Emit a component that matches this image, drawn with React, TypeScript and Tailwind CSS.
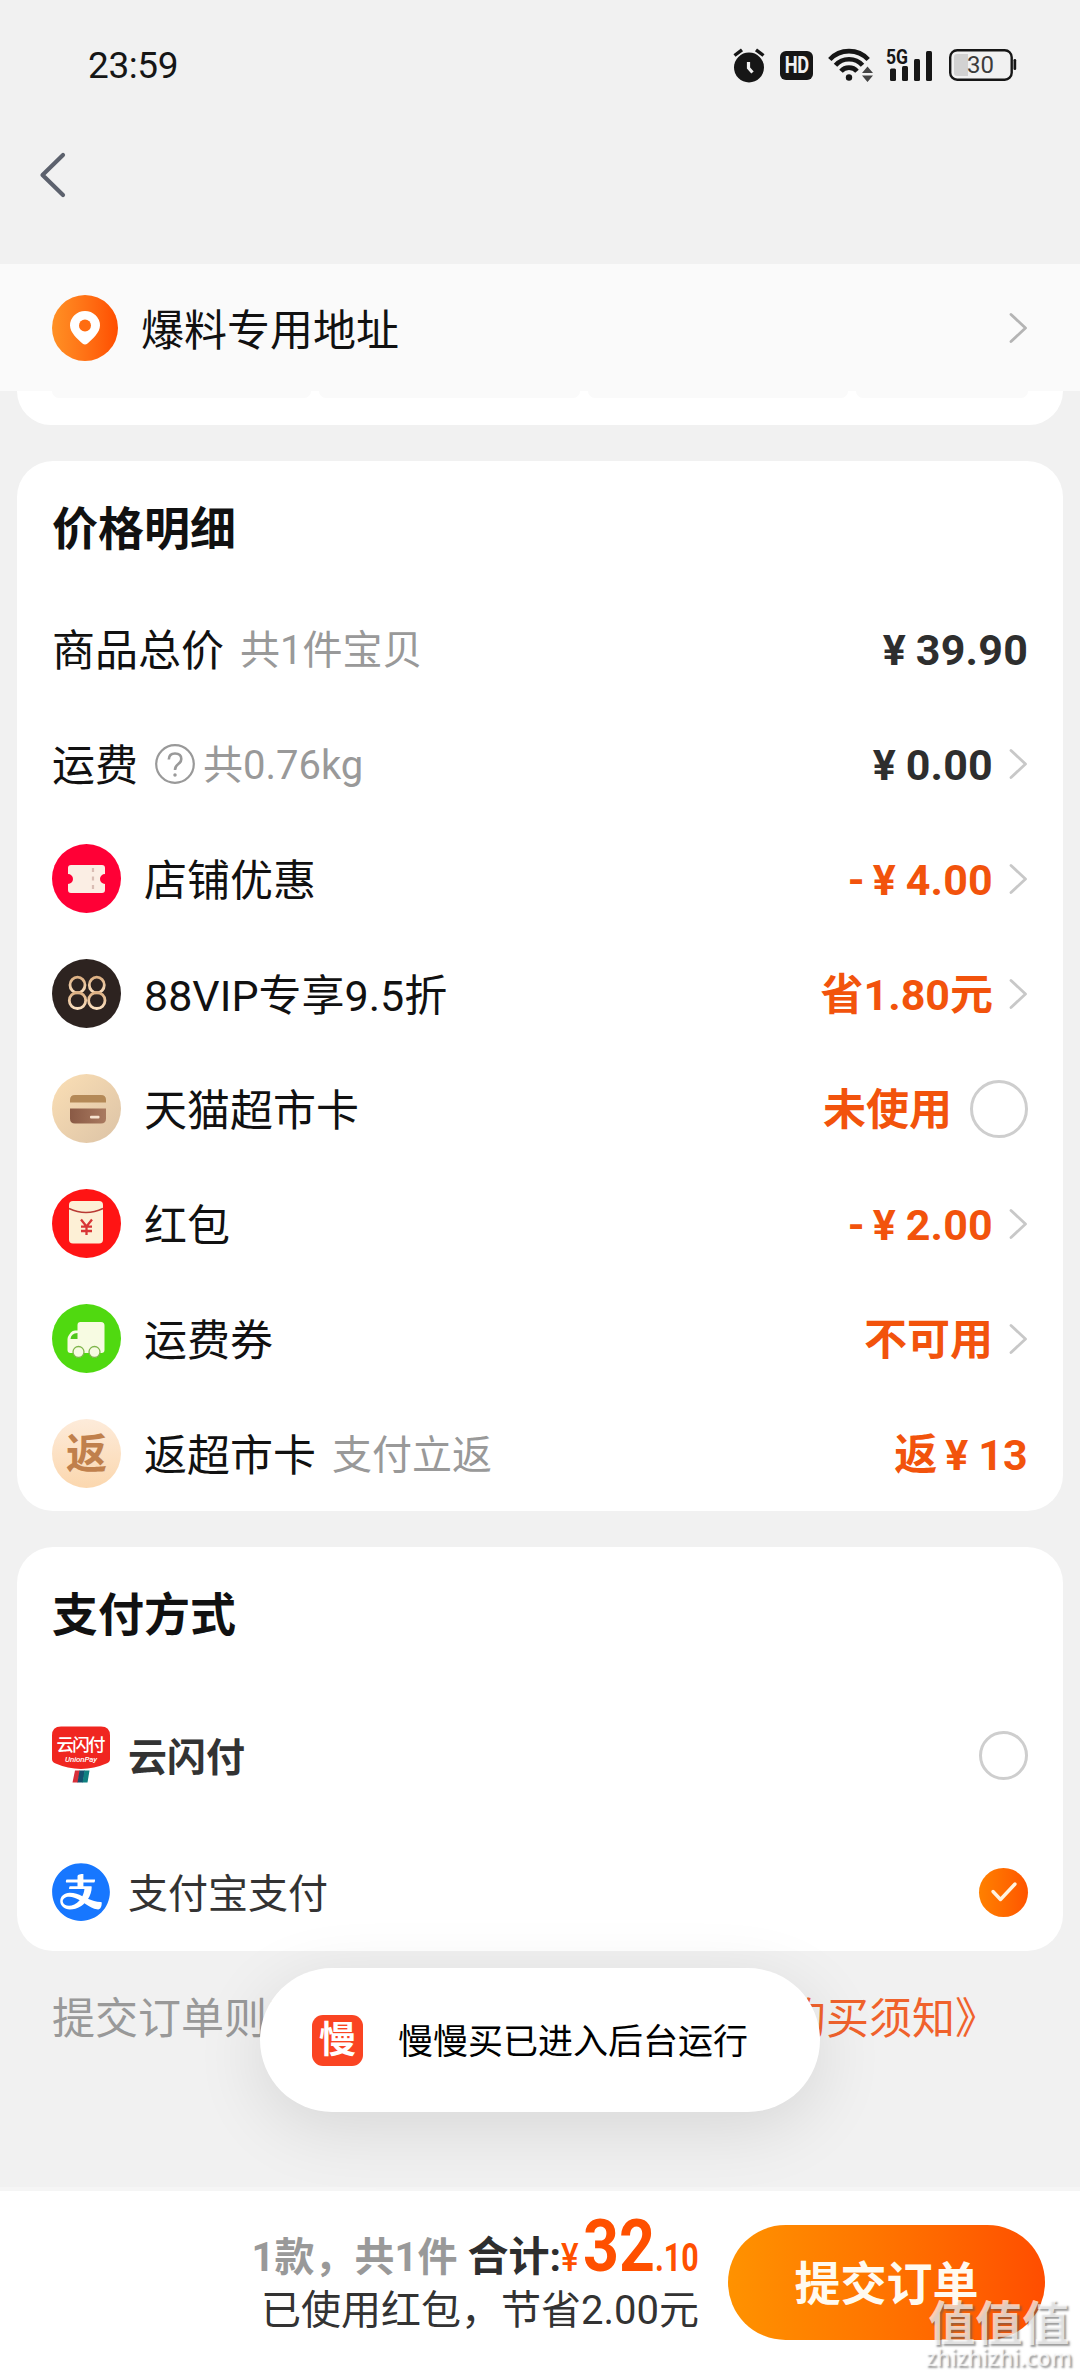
import React, { useState } from 'react';
import { AiFillAlipayCircle } from 'react-icons/ai';

interface PriceRow {
  id: string;
  icon?: React.ReactNode;
  label: string;
  help?: boolean;
  hint?: string;
  value: React.ReactNode;
  accent?: boolean;
  trailing?: 'arrow' | 'radio';
}

const Chevron: React.FC<{ className?: string }> = ({ className = 'text-[#c8c8c8]' }) => (
  <svg width="19" height="32" viewBox="0 0 19 32" fill="none" className={className}>
    <path d="M2 2.5L16.5 16L2 29.5" stroke="currentColor" strokeWidth="2.8" strokeLinecap="round" strokeLinejoin="round" />
  </svg>
);

const StatusBar = () => (
  <div className="flex h-[130px] items-center justify-between pr-[63px] pl-[88px] text-[#161616]">
    <span className="text-[37px] leading-none tracking-[-0.4px]">23:59</span>
    <div className="flex items-center">
      {/* будильник */}
      <svg width="34" height="36" viewBox="0 0 34 36" className="mr-[14px]">
        <circle cx="17" cy="20.5" r="15" fill="#161616" />
        <path d="M2.5 8.5L10 2.8M31.5 8.5L24 2.8" stroke="#161616" strokeWidth="3.4" />
        <path d="M16.5 15V21L20.5 25.5" stroke="#f1f1f1" strokeWidth="3.2" fill="none" />
      </svg>
      <span className="mr-[15px] flex h-[29px] w-[33px] items-center justify-center rounded-[6px] bg-[#161616] text-[24px] leading-none font-bold tracking-[-0.5px] text-[#f1f1f1]">
        <span className="scale-x-[0.76]">HD</span>
      </span>
      <svg width="46" height="36" viewBox="0 0 46 36" className="mr-[12px]" fill="none">
        <g stroke="#161616" strokeWidth="4.6">
          <path d="M1.8 12.5C12 1.3 30 1.3 40.2 12.5" />
          <path d="M7.5 18.3C14.5 10.3 27.5 10.3 34.5 18.3" />
          <path d="M13 24.2C17 19.4 25 19.4 29 24.2" />
        </g>
        <circle cx="21" cy="30.5" r="3.2" fill="#161616" />
        <path d="M34 26L39.5 19.5L45 26ZM34 28.5H45L39.5 35Z" fill="#444" />
      </svg>
      <svg width="48" height="36" viewBox="0 0 48 36" className="mr-[15px] overflow-visible">
        <text x="0" y="17" fontSize="20" fontWeight="700" textLength="22" lengthAdjust="spacingAndGlyphs" fill="#161616">5G</text>
        <rect x="4" y="21.5" width="6" height="12.5" rx="1.5" fill="#161616" />
        <rect x="16" y="19" width="6" height="15" rx="1.5" fill="#161616" />
        <rect x="28" y="12" width="6" height="22" rx="1.5" fill="#161616" />
        <rect x="40" y="4" width="6" height="30" rx="1.5" fill="#161616" />
      </svg>
      <svg width="68" height="36" viewBox="0 0 68 36">
        <rect x="1.2" y="3.2" width="61.5" height="29.5" rx="7" fill="none" stroke="#161616" strokeWidth="2.4" />
        <path d="M8 7H19V29H8Q5 29 5 26V10Q5 7 8 7Z" fill="#d2d2d2" />
        <rect x="64.5" y="12" width="2.7" height="11" rx="1.3" fill="#161616" />
        <text x="31.5" y="26.3" fontSize="24" textAnchor="middle" fill="#3c3c3c">30</text>
      </svg>
    </div>
  </div>
);

const CouponIcon = () => (
  <svg width="69" height="69" viewBox="0 0 69 69">
    <circle cx="34.5" cy="34.5" r="34.5" fill="#ff0036" />
    <path d="M19 21H50Q53 21 53 24V30A5 5 0 0 0 53 40V46Q53 49 50 49H19Q16 49 16 46V40A5 5 0 0 0 16 30V24Q16 21 19 21Z" fill="#fbeee4" />
    <path d="M41 24V47" stroke="#d9bdb4" strokeWidth="2.2" strokeDasharray="4 4.5" />
  </svg>
);

const VipIcon = () => (
  <svg width="69" height="69" viewBox="0 0 69 69" fill="none">
    <defs>
      <linearGradient id="gold" x1="0" y1="0" x2="0" y2="1">
        <stop offset="0" stopColor="#ddb083" />
        <stop offset="1" stopColor="#fbe0c0" />
      </linearGradient>
    </defs>
    <circle cx="34.5" cy="34.5" r="34.5" fill="#2d2320" />
    <g stroke="url(#gold)" strokeWidth="2.8">
      <ellipse cx="25.5" cy="26" rx="7.5" ry="7.8" />
      <ellipse cx="25.5" cy="41.5" rx="8.2" ry="8" />
      <ellipse cx="44.8" cy="26" rx="7.5" ry="7.8" />
      <ellipse cx="44.8" cy="41.5" rx="8.2" ry="8" />
    </g>
  </svg>
);

const MarketCardIcon = () => (
  <svg width="69" height="69" viewBox="0 0 69 69">
    <defs>
      <linearGradient id="cardBg" x1="0" y1="0" x2="1" y2="1">
        <stop offset="0" stopColor="#fbdfb5" />
        <stop offset="1" stopColor="#dcc3a6" />
      </linearGradient>
      <linearGradient id="cardBody" x1="0" y1="0" x2="1" y2="0">
        <stop offset="0" stopColor="#8a5a45" />
        <stop offset="1" stopColor="#a97a60" />
      </linearGradient>
    </defs>
    <circle cx="34.5" cy="34.5" r="34.5" fill="url(#cardBg)" />
    <path d="M18 28.5V26Q18 21 23 21H49Q54 21 54 26V28.5Z" fill="#b48957" />
    <path d="M18 34.5H54V44.5Q54 49.5 49 49.5H23Q18 49.5 18 44.5Z" fill="url(#cardBody)" />
    <rect x="38" y="41.8" width="9.5" height="2.8" rx="1" fill="#f6e3cf" />
  </svg>
);

const RedPacketIcon = () => (
  <svg width="69" height="69" viewBox="0 0 69 69">
    <circle cx="34.5" cy="34.5" r="34.5" fill="#ff1414" />
    <rect x="17" y="12" width="34" height="42.5" rx="4" fill="#fdf0d6" />
    <path d="M17 19.5Q34 27.5 51 19.5" stroke="#b83a34" strokeWidth="1.6" fill="none" />
    <path d="M29 30.5L34.5 37.5L40 30.5M34.5 37.5V46M29 37.7H40M29 42H40" stroke="#d83636" strokeWidth="2.3" fill="none" />
  </svg>
);

const TruckIcon = () => (
  <svg width="69" height="69" viewBox="0 0 69 69">
    <circle cx="34.5" cy="34.5" r="34.5" fill="#50d910" />
    <path d="M28.5 18H49Q52.500 18 52.5 21.5V46Q52.5 49 49.5 49H18.5Q15.5 49 15.5 46V35Q15.5 33 17 31L19 28.3Q20.5 26.5 23 26.5H25.5V21Q25.5 18 28.5 18Z" fill="#f7fbe2" />
    <path d="M18.5 35Q19 29.5 25.5 29V35Z" fill="#50c71c" />
    <circle cx="26.5" cy="48" r="5.5" fill="#f7fbe2" stroke="#7fb54c" strokeWidth="1.3" />
    <circle cx="42.5" cy="48" r="5.5" fill="#f7fbe2" stroke="#7fb54c" strokeWidth="1.3" />
  </svg>
);

const CashbackIcon = () => (
  <span className="flex h-[69px] w-[69px] items-center justify-center rounded-full bg-linear-to-b from-[#fdebda] to-[#fbd7ae] pt-[2px] text-[41px] leading-none font-bold text-[#c0804c]">
    返
  </span>
);

const UnionPayIcon = () => (
  <svg width="58" height="58" viewBox="0 0 58 58">
    <path d="M9 0.5H49Q58 0.5 58 9.5V33Q58 36 55 37.3Q42 43 29 43Q16 43 3 37.3Q0 36 0 33V9.5Q0 0.5 9 0.5Z" fill="#f02620" />
    <text x="29" y="25" fontSize="17.5" fontWeight="500" textAnchor="middle" textLength="49" fill="#fff">云闪付</text>
    <text x="29" y="35.5" fontSize="8" fontWeight="500" fontStyle="italic" textAnchor="middle" textLength="32" fill="#fff">UnionPay</text>
    <path d="M23 44.5H28L26 56.5H20.5Z" fill="#d8303a" />
    <path d="M27.5 44.5H33L31 56.5H25.500Z" fill="#14506e" />
    <path d="M32.5 44.5H37.5L35.5 56.5H30.5Z" fill="#0f8080" />
  </svg>
);

const Radio: React.FC<{ checked?: boolean; large?: boolean }> = ({ checked, large }) => {
  if (checked) {
    return (
      <span className="flex h-[49px] w-[49px] items-center justify-center rounded-full bg-linear-to-r from-[#ff8000] to-[#ff5400]">
        <svg width="28" height="22" viewBox="0 0 28 22" fill="none">
          <path d="M3 10.5L10.5 18.5L25 3" stroke="#fff3e0" strokeWidth="3.4" strokeLinecap="round" strokeLinejoin="round" />
        </svg>
      </span>
    );
  }
  return (
    <span
      className={
        large
          ? 'h-[58px] w-[58px] rounded-full border-3 border-[#cecece]'
          : 'h-[49px] w-[49px] rounded-full border-3 border-[#cecece]'
      }
    />
  );
};

const Money: React.FC<{ prefix?: string; amount: string }> = ({ prefix, amount }) => (
  <span className="flex items-center">
    {prefix && <span className="mr-[8px]">{prefix}</span>}
    <span className="mr-[10px]">¥</span>
    <span className="tracking-[0.2px]">{amount}</span>
  </span>
);

const priceRows: PriceRow[] = [
  { id: 'total', label: '商品总价', hint: '共1件宝贝', value: <Money amount="39.90" /> },
  { id: 'shipping', label: '运费', help: true, hint: '共0.76kg', value: <Money amount="0.00" />, trailing: 'arrow' },
  { id: 'shop', icon: <CouponIcon />, label: '店铺优惠', value: <Money prefix="-" amount="4.00" />, accent: true, trailing: 'arrow' },
  { id: 'vip', icon: <VipIcon />, label: '88VIP专享9.5折', value: '省1.80元', accent: true, trailing: 'arrow' },
  { id: 'card', icon: <MarketCardIcon />, label: '天猫超市卡', value: '未使用', accent: true, trailing: 'radio' },
  { id: 'packet', icon: <RedPacketIcon />, label: '红包', value: <Money prefix="-" amount="2.00" />, accent: true, trailing: 'arrow' },
  { id: 'coupon', icon: <TruckIcon />, label: '运费券', value: '不可用', accent: true, trailing: 'arrow' },
  { id: 'cashback', icon: <CashbackIcon />, label: '返超市卡', hint: '支付立返', value: <Money prefix="返" amount="13" />, accent: true },
];

const PriceLine: React.FC<{ row: PriceRow }> = ({ row }) => (
  <div className="flex h-[115px] items-center justify-between">
    <div className="flex items-center">
      {row.icon && <span className="mr-[23px]">{row.icon}</span>}
      <span className="pt-[5px] text-[43px] text-[#111]">{row.label}</span>
      {row.help && (
        <svg width="40" height="40" viewBox="0 0 40 40" fill="none" stroke="#999" className="mr-[-8px] ml-[17px]">
          <circle cx="20" cy="20" r="18.8" strokeWidth="2.2" />
          <path d="M13.8 15.5Q14 9.5 20 9.5Q26.300 9.5 26.3 15Q26.3 18 23 20.3Q20 22.5 20 26" strokeWidth="2.6" />
          <circle cx="20" cy="31" r="1" fill="#999" strokeWidth="1.5" />
        </svg>
      )}
      {row.hint && <span className="ml-4 pt-[5px] text-[40px] text-[#999]">{row.hint}</span>}
    </div>
    <div className="flex items-center">
      <span className={row.accent ? 'pt-[3px] text-[43px] font-bold text-[#f2530c]' : 'pt-[3px] text-[43px] font-bold text-[#2e2e2e]'}>
        {row.value}
      </span>
      {row.trailing === 'arrow' && <span className="ml-4"><Chevron /></span>}
      {row.trailing === 'radio' && <span className="ml-[18px] flex"><Radio large /></span>}
    </div>
  </div>
);

export default function App() {
  const [payment, setPayment] = useState<'union' | 'alipay'>('alipay');

  return (
    <div className="relative flex h-[2376px] w-[1080px] flex-col overflow-hidden bg-[#f1f1f1] font-['Roboto','Noto_Sans_CJK_SC',sans-serif] leading-none">
      {/* шапка */}
      <header className="h-[264px] shrink-0">
        <StatusBar />
        <button className="mt-[21px] ml-[39px] block">
          <svg width="28" height="48" viewBox="0 0 28 48" fill="none">
            <path d="M24 4L3.5 24L24 44" stroke="#5c616d" strokeWidth="4.2" strokeLinecap="round" strokeLinejoin="round" />
          </svg>
        </button>
      </header>

      {/* адрес */}
      <section className="flex h-[127px] shrink-0 items-center justify-between bg-[#fafafa] pr-[52px] pl-[52px]">
        <div className="flex items-center">
          <span className="flex h-[66px] w-[66px] items-center justify-center rounded-full bg-linear-to-r from-[#ff9024] to-[#ff4d00]">
            <svg width="32" height="36" viewBox="0 0 32 36">
              <path d="M16 1A15 14.5 0 0 1 31 15.5C31 22.5 23.5 29 18.5 33.5Q16 35.5 13.5 33.5C8.5 29 1 22.5 1 15.5A15 14.5 0 0 1 16 1Z" fill="#fff" />
              <circle cx="16" cy="15.5" r="6" fill="#ff6c10" />
            </svg>
          </span>
          <span className="mt-[7px] ml-[23px] text-[43px] text-[#111]">爆料专用地址</span>
        </div>
        <Chevron className="text-[#b4b4b4]" />
      </section>

      {/* нижний край карточки товара */}
      <section className="mx-[17px] flex h-[34px] shrink-0 gap-2 overflow-hidden rounded-b-[36px] bg-white px-[35px]">
        <div className="h-[7px] w-[259px] rounded-b-[14px] bg-[#fafafa]" />
        <div className="h-[7px] w-[261px] rounded-b-[14px] bg-[#fafafa]" />
        <div className="h-[7px] w-[260px] rounded-b-[14px] bg-[#fafafa]" />
        <div className="h-[7px] flex-1 rounded-b-[14px] bg-[#fafafa]" />
      </section>

      {/* детали цены */}
      <section className="mx-[17px] mt-[36px] h-[1050px] shrink-0 rounded-[36px] bg-white px-[35px]">
        <h2 className="flex h-[130px] items-center pt-[5px] text-[46px] font-bold text-[#111]">价格明细</h2>
        {priceRows.map((row) => (
          <PriceLine key={row.id} row={row} />
        ))}
      </section>

      {/* способ оплаты */}
      <section className="mx-[17px] mt-[36px] h-[404px] shrink-0 rounded-[36px] bg-white px-[35px]">
        <h2 className="flex h-[130px] items-center pt-[5px] text-[46px] font-bold text-[#111]">支付方式</h2>
        <div className="mt-[49px] flex flex-col gap-[79px]">
          <div className="flex h-[58px] items-center justify-between" onClick={() => setPayment('union')}>
            <div className="flex items-center gap-[18px]">
              <UnionPayIcon />
              <span className="pt-[6px] text-[39px] font-bold text-[#333]">云闪付</span>
            </div>
            <Radio checked={payment === 'union'} />
          </div>
          <div className="flex h-[58px] items-center justify-between" onClick={() => setPayment('alipay')}>
            <div className="flex items-center">
              <AiFillAlipayCircle className="-m-[4px] h-[66px] w-[66px] text-[#1777ff]" />
              <span className="ml-[21px] -translate-x-[3px] pt-[5px] text-[40px] text-[#333]">支付宝支付</span>
            </div>
            <Radio checked={payment === 'alipay'} />
          </div>
        </div>
      </section>

      <p className="mt-[47px] shrink-0 pl-[52px] text-[43px] whitespace-nowrap text-[#999]">
        提交订单则表示您已阅读并同意遵守<span className="text-[#f0622c]">《购买须知》</span>
      </p>

      {/* панель заказа */}
      <footer className="mt-auto flex h-[189px] shrink-0 border-t-4 border-[#f5f5f5] bg-white pr-[35px]">
        <div className="flex flex-1 flex-col items-end pr-[29px]">
          <div className="mt-[24px] flex h-[68px] items-baseline">
            <span className="text-[40px] font-bold text-[#999]">1款，共1件</span>
            <span className="ml-[10px] text-[41px] font-bold text-[#2e2e2e]">合计:</span>
            <span className="w-[22px] origin-left scale-x-[0.85] text-[39px] font-medium text-[#ff5000]">¥</span>
            <span className="w-[72px] origin-left scale-x-[0.87] text-[72px] leading-[64px] font-bold text-[#ff5000]">32</span>
            <span className="w-[44px] origin-left scale-x-[0.78] text-[39px] font-bold text-[#ff5000]">.10</span>
          </div>
          <span className="mt-[8px] text-[40px] text-[#333]">已使用红包，节省2.00元</span>
        </div>
        <button className="mt-[34px] flex h-[115px] w-[317px] items-center justify-center rounded-full bg-linear-to-r from-[#ff9200] to-[#ff4d00] pt-[3px] text-[46px] font-bold text-[#fffaf0]">
          提交订单
        </button>
      </footer>

      {/* уведомление поверх страницы */}
      <div className="absolute top-[1968px] left-[260px] flex h-[144px] w-[560px] items-center rounded-full bg-white pl-[52px] shadow-[0_16px_70px_rgba(0,0,0,0.11)]">
        <span className="flex h-[51px] w-[51px] items-center justify-center rounded-[11px] bg-[#fa4422] text-[37px] font-bold text-white">
          慢
        </span>
        <span className="mt-[5px] ml-[35px] text-[35px] text-black">慢慢买已进入后台运行</span>
      </div>

      <div className="absolute right-[8px] bottom-[7px] flex flex-col items-center text-white/70 [text-shadow:2px_2px_2px_rgba(90,90,90,0.6)]">
        <span className="text-[47px] font-bold">值值值</span>
        <span className="font-['Open_Sans',sans-serif] text-[22.5px] font-semibold">zhizhizhi.com</span>
      </div>
    </div>
  );
}
